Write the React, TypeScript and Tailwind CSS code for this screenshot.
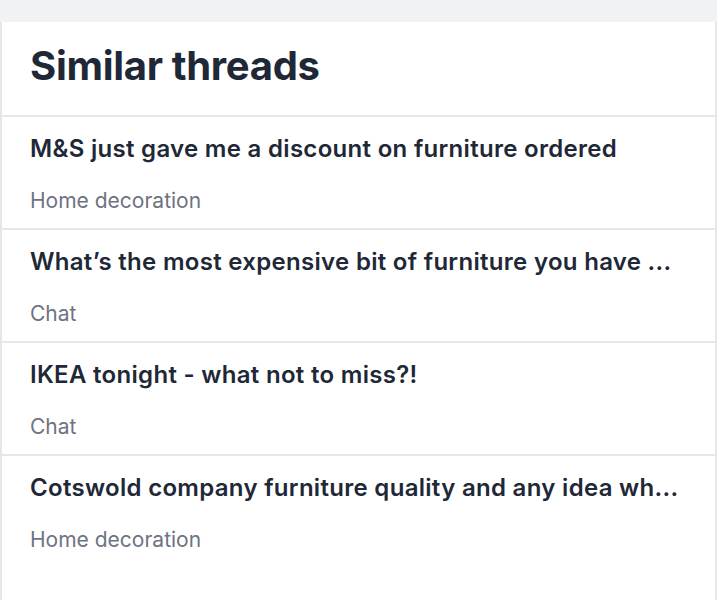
const threads = [
  { title: 'M&S just gave me a discount on furniture ordered', topic: 'Home decoration' },
  { title: 'What\u2019s the most expensive bit of furniture you have ...', topic: 'Chat' },
  { title: 'IKEA tonight - what not to miss?!', topic: 'Chat' },
  { title: 'Cotswold company furniture quality and any idea wh...', topic: 'Home decoration' },
];

export default function App() {
  return (
    <div className="min-h-[600px] bg-[#f1f2f4] pt-[22px] font-['Inter',sans-serif]">
      <div className="min-h-[578px] border-x-2 border-[#e6e7eb] bg-white">
        <div className="h-[95px] border-b-2 border-[#e6e7eb] px-[28px] pt-[18px]">
          <h2 className="text-[40px] font-bold leading-[52px] tracking-[-0.3px] text-[#1f2837]">Similar threads</h2>
        </div>
        {threads.map((t, i) => (
          <div key={i} className="h-[113px] border-b-2 border-[#e6e7eb] px-[28px] pt-[15px] last:border-b-0">
            <p className="text-[24px] font-semibold leading-[34px] tracking-[0.3px] text-[#1f2837]">{t.title}</p>
            <p className="mt-[20px] text-[21px] leading-[30px] text-[#6d7383]">{t.topic}</p>
          </div>
        ))}
      </div>
    </div>
  );
}
